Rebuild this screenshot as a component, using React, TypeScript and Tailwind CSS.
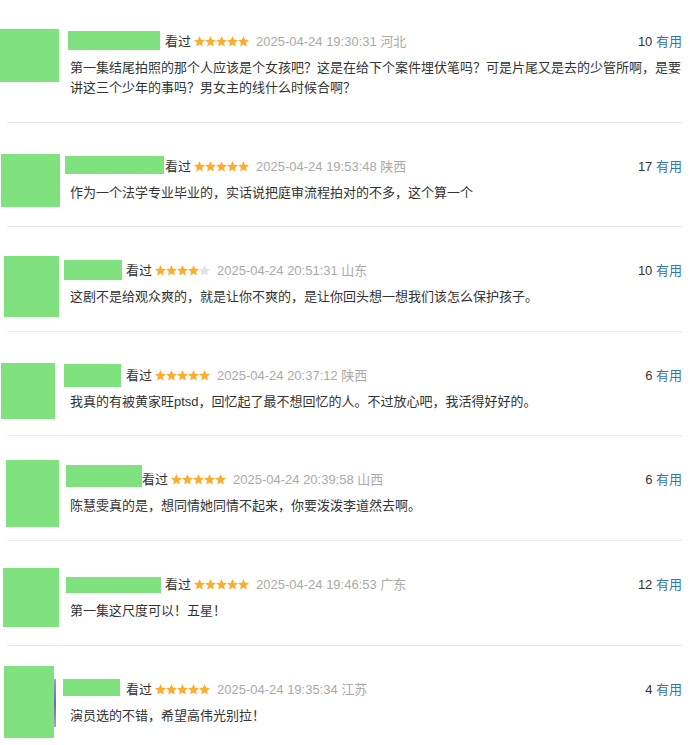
import React from 'react';

type Review = {
  avatar: string;
  strip?: boolean;
  slot: string;
  name: string;
  stars: number;
  time: string;
  place: string;
  votes: number;
  text: string;
};

const reviews: Review[] = [
  {
    avatar: 'ml-0 mt-[31px] w-[59px] h-[53px]',
    slot: 'w-[101px]',
    name: 'ml-[4px] -mt-px w-[92px] h-[19px]',
    stars: 5,
    time: '2025-04-24 19:30:31',
    place: '河北',
    votes: 10,
    text: '第一集结尾拍照的那个人应该是个女孩吧？这是在给下个案件埋伏笔吗？可是片尾又是去的少管所啊，是要讲这三个少年的事吗？男女主的线什么时候合啊？',
  },
  {
    avatar: 'ml-[1px] mt-[31px] w-[59px] h-[53px]',
    slot: 'w-[101px]',
    name: 'ml-[1px] -mt-px w-[99px] h-[18px]',
    stars: 5,
    time: '2025-04-24 19:53:48',
    place: '陕西',
    votes: 17,
    text: '作为一个法学专业毕业的，实话说把庭审流程拍对的不多，这个算一个',
  },
  {
    avatar: 'ml-[4px] mt-[29px] w-[55px] h-[61px]',
    slot: 'w-[62px]',
    name: 'ml-0 -mt-px w-[58px] h-[20px]',
    stars: 4,
    time: '2025-04-24 20:51:31',
    place: '山东',
    votes: 10,
    text: '这剧不是给观众爽的，就是让你不爽的，是让你回头想一想我们该怎么保护孩子。',
  },
  {
    avatar: 'ml-[1px] mt-[31px] w-[54px] h-[56px]',
    slot: 'w-[62px]',
    name: 'ml-0 -mt-[2px] w-[57px] h-[23px]',
    stars: 5,
    time: '2025-04-24 20:37:12',
    place: '陕西',
    votes: 6,
    text: '我真的有被黄家旺ptsd，回忆起了最不想回忆的人。不过放心吧，我活得好好的。',
  },
  {
    avatar: 'ml-[6px] mt-[24px] w-[53px] h-[67px]',
    slot: 'w-[78px]',
    name: 'ml-[2px] -mt-[5px] w-[76px] h-[22px]',
    stars: 5,
    time: '2025-04-24 20:39:58',
    place: '山西',
    votes: 6,
    text: '陈慧雯真的是，想同情她同情不起来，你要泼泼李道然去啊。',
  },
  {
    avatar: 'ml-[3px] mt-[27px] w-[56px] h-[59px]',
    slot: 'w-[101px]',
    name: 'ml-[2px] mt-[2px] w-[95px] h-[16px]',
    stars: 5,
    time: '2025-04-24 19:46:53',
    place: '广东',
    votes: 12,
    text: '第一集这尺度可以！五星！',
  },
  {
    avatar: 'ml-[4px] mt-[20px] w-[50px] h-[72px]',
    strip: true,
    slot: 'w-[62px]',
    name: 'ml-[-1px] -mt-px w-[57px] h-[17px]',
    stars: 5,
    time: '2025-04-24 19:35:34',
    place: '江苏',
    votes: 4,
    text: '演员选的不错，希望高伟光别拉！',
  },
];

const Star = ({ on }: { on: boolean }) => (
  <svg width="11" height="11" viewBox="1 1 22 22" className="block">
    <polygon
      points="12,1 15.1,8.3 23,9 17,14.3 18.8,22.1 12,18 5.2,22.1 7,14.3 1,9 8.9,8.3"
      fill={on ? '#ffac2d' : '#e3e3e3'}
    />
  </svg>
);

const ReviewItem = ({ r, last }: { r: Review; last: boolean }) => (
  <div>
    <div className="flex">
      <div className="w-[64px] flex-none">
        <div className="flex">
          <div className={`bg-[#80e27e] flex-none ${r.avatar}`} />
          {r.strip && (
            <div className="mt-[33px] w-[2px] h-[48px] bg-gradient-to-b from-[#9d9ad8] via-[#6e6ab0] to-[#a79fc8]" />
          )}
        </div>
      </div>
      <div className="flex-1 min-w-0 pt-[34px] pr-[17px] pb-[23.6px]">
        <div className="flex items-start h-[20px] leading-[20px]">
          <div className={`flex-none h-[20px] ${r.slot}`}>
            <div className={`bg-[#80e27e] ${r.name}`} />
          </div>
          <span className="text-[#333]">看过</span>
          <span className="flex ml-[3px] mt-[4px]">
            {[0, 1, 2, 3, 4].map((i) => (
              <Star key={i} on={i < r.stars} />
            ))}
          </span>
          <span className="ml-[7px] text-[#aaa]">
            {r.time} {r.place}
          </span>
          <span className="ml-auto">
            <span className="text-[#333]">{r.votes}</span>{' '}
            <span className="text-[#3377aa]">有用</span>
          </span>
        </div>
        <p className="mt-[6px] pl-[6px] leading-[20px] text-[#333]">{r.text}</p>
      </div>
    </div>
    {!last && <div className="ml-[7px] mr-[17px] h-px bg-[#eaeaea]" />}
  </div>
);

const App: React.FC = () => {
  return (
    <div
      className="w-[699px] h-[745px] overflow-hidden bg-white text-[13px]"
      style={{ fontFamily: '"Liberation Sans", "Noto Sans CJK SC", sans-serif' }}
    >
      <div className="-mt-[2px]">
        {reviews.map((r, i) => (
          <ReviewItem key={i} r={r} last={i === reviews.length - 1} />
        ))}
      </div>
    </div>
  );
};

export default App;
